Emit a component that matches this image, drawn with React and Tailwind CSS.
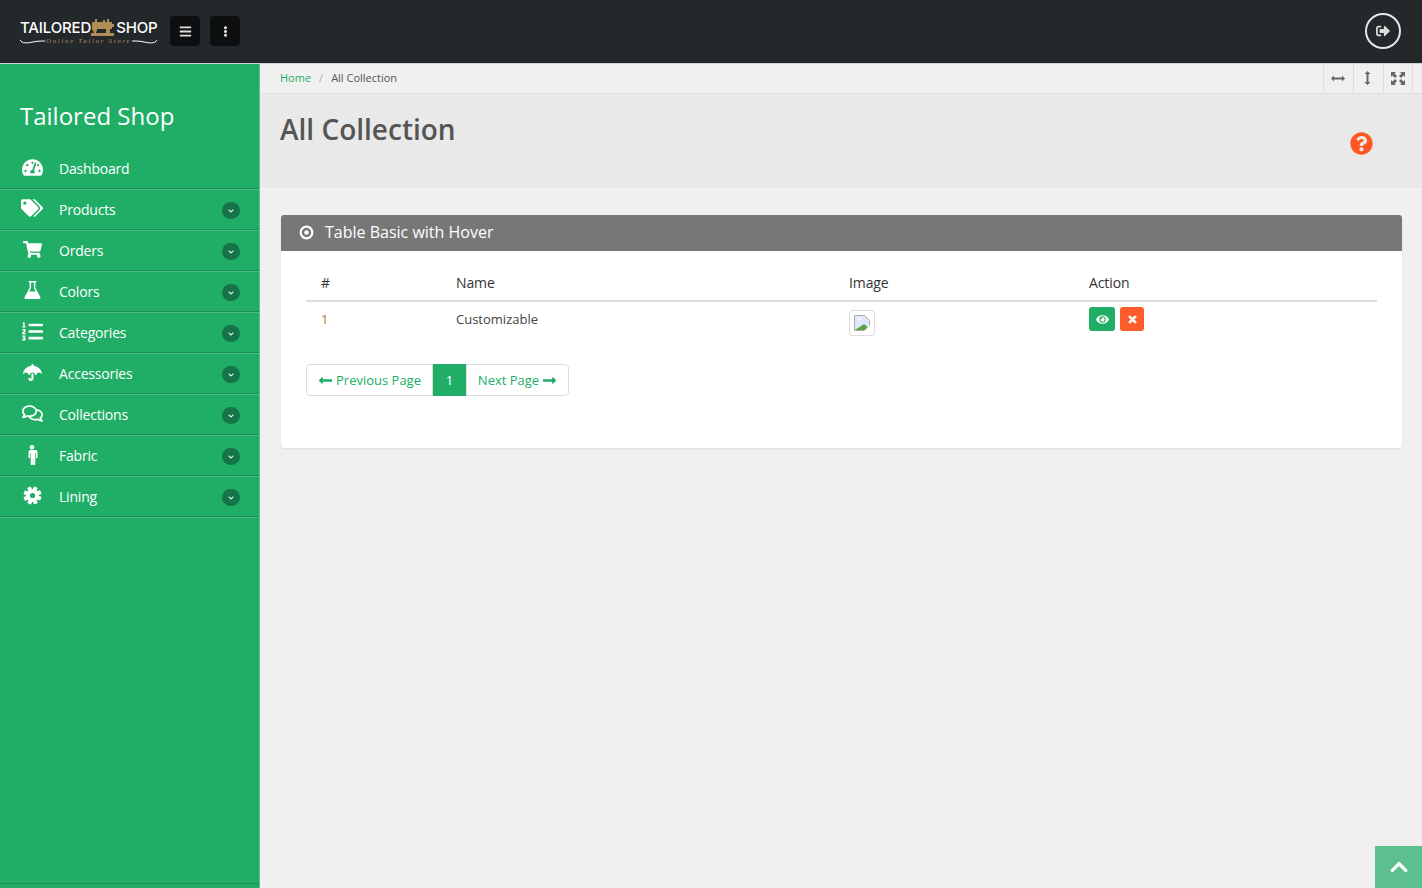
import { FaTachometerAlt, FaTags, FaShoppingCart, FaListOl, FaUmbrella, FaRegComments, FaChevronDown, FaBars, FaEllipsisV, FaSignOutAlt, FaQuestionCircle, FaEye, FaTimes, FaLongArrowAltLeft, FaLongArrowAltRight, FaChevronUp } from 'react-icons/fa'

// FA4 style flask, outlined neck and filled bottom
function Flask({ size }) {
    return (
        <svg width={size} height={size + 1} viewBox="0 0 17 19" fill="currentColor">
            <path fillRule="evenodd" d="M4.5 0h8v1.5h-1V7l5.3 10c.6 1.1 0 2-1.2 2H1.4C.2 19-.4 18.1.2 17L5.500 7V1.500h-1zM7 1.500V7.500L5 11h7L10 7.500V1.500z" />
        </svg>
    )
}

function Man({ size }) {
    return (
        <svg width={size * 0.6} height={size} viewBox="0 0 12 20" fill="currentColor" className="mt-[2px]">
            <circle cx="6" cy="2.200" r="2.200" />
            <path d="M2.500 5h7a2 2 0 012 2v5.500a.8.8 0 01-1.600 0V8h-.6v11a1.100 1.100 0 01-2.200 0v-6h-.2v6a1.100 1.100 0 01-2.200 0V8h-.6v4.500a.8.8 0 01-1.600 0V7a2 2 0 012-2z" />
        </svg>
    )
}

function Gear({ size }) {
    return (
        <svg width={size} height={size} viewBox="0 0 19 19" fill="currentColor">
            {[22, 67, 112, 157].map(a => (
                <rect key={a} x="7.500" y="0.500" width="4" height="18" rx="0.500" transform={`rotate(${a} 9.500 9.500)`} />
            ))}
            <circle cx="9.500" cy="9.500" r="6.300" />
            <circle cx="9.500" cy="9.500" r="2.600" fill="#20ae66" />
        </svg>
    )
}

const menu = [
    { label: 'Dashboard', icon: FaTachometerAlt, size: 21 },
    { label: 'Products', icon: FaTags, size: 22, more: true },
    { label: 'Orders', icon: FaShoppingCart, size: 19, more: true },
    { label: 'Colors', icon: Flask, size: 17, more: true },
    { label: 'Categories', icon: FaListOl, size: 21, more: true },
    { label: 'Accessories', icon: FaUmbrella, size: 19, more: true },
    { label: 'Collections', icon: FaRegComments, size: 21, more: true },
    { label: 'Fabric', icon: Man, size: 20, more: true },
    { label: 'Lining', icon: Gear, size: 19, more: true },
]

// Logo: wordmark around a small sewing machine
function Logo() {
    return (
        <div className="w-[138px] mt-[2px] flex flex-col">
            <div className="flex items-end h-[20px] font-['Inter',sans-serif] text-[15px] leading-[20px] tracking-[-0.15px] text-white font-medium">
                <span>TAILORED</span>
                <svg width="24" height="17" viewBox="0 0 24 17" className="mb-[2px] mr-[1px] shrink-0" fill="#b08d57">
                    <path d="M1 3h3V0h2v3h6V1h2v2h2V0h2v3h3v2h2v3h-2v2h-2v5h-4v-5H6v1l-1 3H3l-1-3H1z" />
                    <path d="M0 14h23v3H0z" />
                </svg>
                <span>SHOP</span>
            </div>
            <div className="flex items-center h-[9px] gap-[1px] -mt-[1px]">
                <svg width="25" height="6" viewBox="0 0 25 6" className="shrink-0">
                    <path d="M0 1c2 4 8 3 13 2 4-1 8-1 12-1" stroke="#fff" fill="none" />
                </svg>
                <span className="font-['Liberation_Serif',serif] italic text-[7px] leading-[9px] tracking-[1.65px] text-[#b08d57] whitespace-nowrap">Online Tailor Store</span>
                <svg width="25" height="6" viewBox="0 0 25 6" className="shrink-0">
                    <path d="M25 1c-2 4-8 3-13 2C8 2 4 2 0 2" stroke="#fff" fill="none" />
                </svg>
            </div>
        </div>
    )
}

function MenuItem({ item }) {
    const Icon = item.icon
    return (
        <div className="h-[41px] flex items-center pl-5 pr-[19px] border-b border-b-[#1a9058] shadow-[0_1px_0_#4bbd84] text-white">
            <span className="w-[24px] flex justify-center shrink-0 -mt-[2px]">
                <Icon size={item.size} />
            </span>
            <span className="ml-[15px] text-[14px] tracking-[-0.2px]">{item.label}</span>
            {item.more && (
                <span className="ml-auto w-[18px] h-[17px] mt-[3px] rounded-full bg-[#137548] flex items-center justify-center">
                    <FaChevronDown size={6} />
                </span>
            )}
        </div>
    )
}

function BrokenImage() {
    return (
        <svg width="16" height="16" viewBox="0 0 16 16">
            <path d="M.5.5h10l5 5v10H.5z" fill="#dfe8f8" stroke="#a9a9a9" />
            <path d="M1 15l9-6 5 4v2z" fill="#5ba345" />
            <path d="M3 5c1-2 3-2 4 0z" fill="#fff" />
            <path d="M10 16l6-6v6z" fill="#fff" />
        </svg>
    )
}

export default function App() {
    return (
        <div className="h-[888px] overflow-hidden flex flex-col bg-[#f0f0f0] font-['Open_Sans',sans-serif]">
            {/* Top bar */}
            <header className="h-[64px] shrink-0 bg-[#23282b] border-b border-b-[#cfd3d1] flex items-center pl-5 pr-[21px] pb-[1px]">
                <Logo />
                <button className="ml-[12px] w-[30px] h-[30px] rounded-[4px] bg-[#0d0f11] text-[#dfdfdf] flex items-center justify-center">
                    <FaBars size={13} />
                </button>
                <button className="ml-[10px] w-[30px] h-[30px] rounded-[4px] bg-[#0d0f11] text-[#dfdfdf] flex items-center justify-center">
                    <FaEllipsisV size={11} />
                </button>
                <button className="ml-auto w-[36px] h-[36px] rounded-full border-2 border-[#e6e6e6] text-[#dcdcdc] flex items-center justify-center">
                    <FaSignOutAlt size={14} />
                </button>
            </header>

            <div className="flex-1 flex min-h-0">
                {/* Sidebar */}
                <aside className="w-[260px] shrink-0 bg-[#20ae66] border-r border-r-[#5fc08f] flex flex-col">
                    <h1 className="h-[84px] pl-5 pt-[35px] text-[24px] leading-[33px] text-white">Tailored Shop</h1>
                    <nav className="flex flex-col">
                        {menu.map(item => <MenuItem key={item.label} item={item} />)}
                    </nav>
                    <div className="mt-auto mb-[4px] h-px bg-[#1a9058]" />
                </aside>

                <main className="flex-1 min-w-0 flex flex-col">
                    {/* Breadcrumb */}
                    <div className="h-[30px] shrink-0 bg-[#f0f0f0] border-b border-b-[#e2e2e2] flex items-center pl-5 pr-[9px] text-[11px]">
                        <span className="text-[#20ae66]">Home</span>
                        <span className="mx-[8px] text-[#aaaaaa]">/</span>
                        <span className="text-[#555555]">All Collection</span>
                        <div className="ml-auto flex h-full text-[#666]">
                            <span className="w-[30px] pr-[1px] pb-[1px] flex items-center justify-center border-l border-l-[#dddddd]">
                                <svg width="14" height="7" viewBox="0 0 14 7" fill="currentColor"><path d="M0 3.500L3 .5v2h8v-2l3 3-3 3v-2H3v2z" /></svg>
                            </span>
                            <span className="w-[30px] pr-[2px] pb-[1px] flex items-center justify-center border-l border-l-[#dddddd]">
                                <svg width="7" height="14" viewBox="0 0 7 14" fill="currentColor"><path d="M3.500 0l3 3h-2v8h2l-3 3-3-3h2V3h-2z" /></svg>
                            </span>
                            <span className="w-[30px] pb-[1px] flex items-center justify-center border-x border-x-[#dddddd]">
                                <svg width="14" height="13" viewBox="0 0 14 13" fill="currentColor">
                                    <path d="M0 0h5L3.500 1.500 6 4 4 6 1.500 3.500 0 5zM14 0v5l-1.500-1.500L10 6 8 4l2.500-2.500L9 0zM0 13V8l1.500 1.500L4 7l2 2-2.500 2.500L5 13zM14 13H9l1.500-1.500L8 9l2-2 2.500 2.500L14 8z" />
                                </svg>
                            </span>
                        </div>
                    </div>

                    {/* Page title */}
                    <div className="h-[95px] shrink-0 bg-[#e9e9e9] border-b border-b-[#f5f5f5] flex pl-5 pr-[49px]">
                        <h2 className="mt-[15px] text-[28px] leading-[40px] font-semibold text-[#555555]">All Collection</h2>
                        <FaQuestionCircle size={23} className="ml-auto mt-[38px] text-[#ff5722]" />
                    </div>

                    {/* Panel */}
                    <section className="mt-[26px] ml-[21px] mr-5 h-[233px] bg-white rounded-[3px] shadow-[0_1px_2px_rgba(0,0,0,0.08)]">
                        <div className="h-[36px] bg-[#777777] rounded-t-[3px] flex items-center pl-[18px] pb-[2px] text-white text-[16px]">
                            <svg width="15" height="15" viewBox="0 0 15 15" className="shrink-0">
                                <circle cx="7.500" cy="7.500" r="5.800" fill="none" stroke="#fff" strokeWidth="2.200" />
                                <circle cx="7.500" cy="7.500" r="2.300" fill="#fff" />
                            </svg>
                            <span className="ml-[11px]">Table Basic with Hover</span>
                        </div>
                        <div className="px-[25px] pt-[14px]">
                            <table className="w-full table-fixed text-[13px] text-[#444]">
                                <thead>
                                    <tr className="h-[36px] border-b-2 border-b-[#dddddd] text-left text-[14px] tracking-[-0.1px] text-[#333]">
                                        <th className="w-[150px] pl-[15px] font-normal">#</th>
                                        <th className="w-[393px] font-normal">Name</th>
                                        <th className="w-[240px] font-normal">Image</th>
                                        <th className="font-normal">Action</th>
                                    </tr>
                                </thead>
                                <tbody>
                                    <tr className="align-top">
                                        <td className="pl-[15px] pt-[8px] text-[#b07a2a]">1</td>
                                        <td className="pt-[8px]">Customizable</td>
                                        <td className="pt-[8px]">
                                            <span className="w-[26px] h-[26px] border border-[#dddddd] rounded-[3px] flex items-center justify-center">
                                                <BrokenImage />
                                            </span>
                                        </td>
                                        <td className="pt-[5px]">
                                            <div className="flex gap-[5px]">
                                                <span className="w-[26px] h-[24px] rounded-[3px] bg-[#20ae66] text-white flex items-center justify-center"><FaEye size={13} /></span>
                                                <span className="w-[24px] h-[24px] rounded-[3px] bg-[#ff5c2b] text-white flex items-center justify-center"><FaTimes size={11} stroke="currentColor" strokeWidth={30} /></span>
                                            </div>
                                        </td>
                                    </tr>
                                </tbody>
                            </table>

                            {/* Pagination */}
                            <div className="mt-[28px] inline-flex h-[32px] text-[13px] text-[#20ae66]">
                                <span className="w-[127px] pt-[1px] border border-[#dddddd] rounded-l-[4px] flex items-center justify-center gap-[3px]">
                                    <FaLongArrowAltLeft size={15} />Previous Page
                                </span>
                                <span className="w-[33px] pt-[1px] bg-[#20ae66] text-white flex items-center justify-center">1</span>
                                <span className="w-[103px] pt-[1px] border border-[#dddddd] rounded-r-[4px] flex items-center justify-center gap-[3px]">
                                    Next Page<FaLongArrowAltRight size={15} />
                                </span>
                            </div>
                        </div>
                    </section>
                </main>
            </div>

            {/* Scroll to top */}
            <button className="fixed right-0 bottom-0 w-[47px] h-[42px] bg-[#5cc08e] text-white flex items-center justify-center">
                <FaChevronUp size={20} />
            </button>
        </div>
    )
}
